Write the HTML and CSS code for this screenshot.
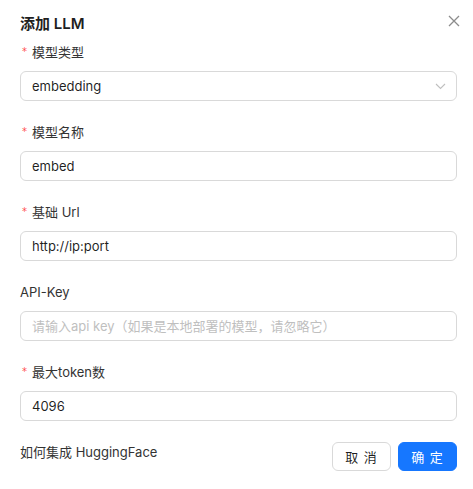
FILE: index.html
```html
<!DOCTYPE html>
<html lang="zh">
<head>
<meta charset="utf-8">
<title>添加 LLM</title>
<link rel="stylesheet" href="styles.css">
</head>
<body>
<div class="modal">
  <div class="header">
    <div class="title">添加 LLM</div>
    <button class="close" aria-label="close">
      <svg width="12" height="12" viewBox="0 0 12 12"><path d="M1 1L11 11M11 1L1 11" stroke="#8c8c8c" stroke-width="1.3" fill="none"/></svg>
    </button>
  </div>
  <form class="form">
    <div class="item">
      <label class="label"><span class="req">*</span>模型类型</label>
      <div class="input select">
        <span>embedding</span>
        <svg class="arrow" width="11" height="7" viewBox="0 0 11 7"><path d="M1 1L5.5 5.5L10 1" stroke="#bfbfbf" stroke-width="1.1" fill="none"/></svg>
      </div>
    </div>
    <div class="item">
      <label class="label"><span class="req">*</span>模型名称</label>
      <div class="input">embed</div>
    </div>
    <div class="item">
      <label class="label"><span class="req">*</span>基础 Url</label>
      <div class="input">http://ip:port</div>
    </div>
    <div class="item">
      <label class="label">API-Key</label>
      <div class="input placeholder">请输入api key（如果是本地部署的模型，请忽略它）</div>
    </div>
    <div class="item">
      <label class="label"><span class="req">*</span>最大token数</label>
      <div class="input">4096</div>
    </div>
  </form>
  <div class="footer">
    <span class="link">如何集成 HuggingFace</span>
    <div class="buttons">
      <button class="btn">取 消</button>
      <button class="btn primary">确 定</button>
    </div>
  </div>
</div>
</body>
</html>
```
FILE: styles.css
```css
* { box-sizing: border-box; }
html, body { margin: 0; padding: 0; background: #fff; }
body {
  font-family: Inter, "Noto Sans CJK SC", sans-serif;
  font-size: 13px;
  color: rgba(0,0,0,0.88);
}
.modal {
  width: 473px;
  height: 489px;
  padding: 12px 16px 0 20px;
}
.header {
  display: flex;
  justify-content: space-between;
  align-items: center;
  height: 24px;
  margin-bottom: 5px;
  width: 441px;
}
.title {
  font-size: 15px;
  font-weight: 600;
  line-height: 24px;
  color: #1f1f1f;
}
.close {
  border: 0;
  background: none;
  padding: 0;
  width: 14px;
  height: 14px;
  display: flex;
  align-items: center;
  justify-content: center;
  margin-top: -6px;
}
.form { display: flex; flex-direction: column; gap: 20px; width: 437px; }
.item { display: flex; flex-direction: column; gap: 8px; }
.label {
  line-height: 22px;
  height: 22px;
  color: #333;
  display: flex;
  align-items: center;
}
.req {
  color: #ff4d4f;
  font-family: "DejaVu Sans", sans-serif;
  font-size: 10px;
  margin-left: 2px;
  margin-right: 5px;
}
.input {
  height: 30px;
  border: 1px solid #d9d9d9;
  border-radius: 6px;
  padding: 0 11px;
  display: flex;
  align-items: center;
  line-height: 22px;
  color: rgba(0,0,0,0.88);
}
.select { justify-content: space-between; }
.arrow { margin-right: -1px; }
.placeholder { color: #bfbfbf; }
.footer {
  width: 437px;
  margin-top: 20px;
  display: flex;
  justify-content: space-between;
  align-items: flex-start;
}
.link { color: #333; line-height: 22px; }
.buttons { display: flex; gap: 7px; padding-top: 1px; }
.btn {
  font-family: Inter, "Noto Sans CJK SC", sans-serif;
  font-size: 13px;
  width: 59px;
  height: 29px;
  border: 1px solid #d9d9d9;
  border-radius: 6px;
  background: #fff;
  color: rgba(0,0,0,0.88);
  padding: 0;
  letter-spacing: 1px;
}
.btn.primary {
  background: #1677ff;
  border-color: #1677ff;
  color: #fff;
}
```
